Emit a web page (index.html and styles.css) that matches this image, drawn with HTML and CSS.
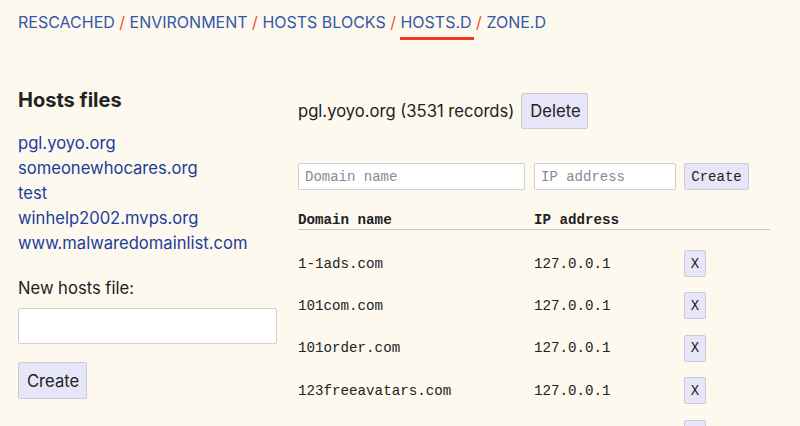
FILE: index.html
```html
<!DOCTYPE html>
<html lang="en">
<head>
<meta charset="utf-8">
<title>Hosts files</title>
<link rel="stylesheet" href="styles.css">
</head>
<body>
<nav class="crumbs">
  <a href="#">RESCACHED</a><span class="sep">/</span><a href="#">ENVIRONMENT</a><span class="sep">/</span><a href="#">HOSTS BLOCKS</a><span class="sep">/</span><a href="#" class="current">HOSTS.D</a><span class="sep">/</span><a href="#">ZONE.D</a>
</nav>
<main class="layout">
  <aside class="sidebar">
    <h2 class="sidebar-title">Hosts files</h2>
    <ul class="files">
      <li><a href="#">pgl.yoyo.org</a></li>
      <li><a href="#">someonewhocares.org</a></li>
      <li><a href="#">test</a></li>
      <li><a href="#">winhelp2002.mvps.org</a></li>
      <li><a href="#">www.malwaredomainlist.com</a></li>
    </ul>
    <form class="new-file">
      <label class="new-file-label" for="nf">New hosts file:</label>
      <input class="new-file-input" id="nf" type="text">
      <button class="btn btn-large" type="button">Create</button>
    </form>
  </aside>
  <section class="detail">
    <div class="detail-head">
      <span class="detail-title">pgl.yoyo.org (3531 records)</span>
      <button class="btn btn-large" type="button">Delete</button>
    </div>
    <form class="add-record">
      <input class="mono-input input-domain" type="text" placeholder="Domain name">
      <input class="mono-input input-ip" type="text" placeholder="IP address">
      <button class="btn btn-mono" type="button">Create</button>
    </form>
    <table class="records">
      <thead>
        <tr><th class="col-domain">Domain name</th><th class="col-ip">IP address</th><th class="col-act"></th></tr>
      </thead>
      <tbody>
        <tr><td>1-1ads.com</td><td>127.0.0.1</td><td><button class="btn btn-x" type="button">X</button></td></tr>
        <tr><td>101com.com</td><td>127.0.0.1</td><td><button class="btn btn-x" type="button">X</button></td></tr>
        <tr><td>101order.com</td><td>127.0.0.1</td><td><button class="btn btn-x" type="button">X</button></td></tr>
        <tr><td>123freeavatars.com</td><td>127.0.0.1</td><td><button class="btn btn-x" type="button">X</button></td></tr>
        <tr class="row-partial"><td></td><td></td><td><button class="btn btn-x" type="button">X</button></td></tr>
      </tbody>
    </table>
  </section>
</main>
</body>
</html>
```

FILE: styles.css
```css
html, body {
  margin: 0;
  padding: 0;
  background: #fdf9ef;
  font-family: Inter, "Noto Sans", sans-serif;
  color: #222;
}

body {
  padding: 12px 18px 0 18px;
  overflow: hidden;
  height: 426px;
  box-sizing: border-box;
}

.crumbs {
  font-size: 16px;
  line-height: 20px;
  letter-spacing: 0;
}

.crumbs a {
  color: #3557a6;
  text-decoration: none;
  display: inline-block;
}

.crumbs .current {
  position: relative;
}

.crumbs .current::after {
  content: "";
  position: absolute;
  left: 0;
  right: -2px;
  top: 25px;
  height: 3px;
  background: #ee3b1e;
}

.crumbs .sep {
  color: #f0512c;
  margin: 0 4.5px;
}

.layout {
  display: flex;
  gap: 21px;
  margin-top: 56px;
}

.sidebar {
  width: 259px;
  flex: none;
}

.sidebar-title {
  margin: 0;
  font-size: 20px;
  line-height: 24px;
  font-weight: 700;
  color: #222;
}

.files {
  list-style: none;
  margin: 19px 0 0 0;
  padding: 0;
  font-size: 16.6px;
  line-height: 25px;
}

.files a {
  color: #1b3d9c;
  text-decoration: none;
}

.new-file {
  display: flex;
  flex-direction: column;
  align-items: flex-start;
  margin-top: 20px;
}

.new-file-label {
  font-size: 16.6px;
  line-height: 25px;
  color: #222;
}

.new-file-input {
  margin-top: 7px;
  width: 259px;
  height: 36px;
  box-sizing: border-box;
  border: 1px solid #cfcfcf;
  border-radius: 2px;
  background: #fff;
}

.btn {
  background: #e6e6f8;
  border: 1px solid #cbcbd6;
  border-radius: 2px;
  color: #222;
  padding: 0;
  box-sizing: border-box;
}

.btn-large {
  font-family: Inter, "Noto Sans", sans-serif;
  font-size: 16.6px;
  height: 37px;
  padding: 0 8px;
}

.new-file .btn-large {
  margin-top: 18px;
  width: 69px;
}

.detail {
  width: 472px;
  flex: none;
  padding-top: 5px;
}

.detail-head {
  display: flex;
  align-items: center;
  gap: 7px;
}

.detail-title {
  font-size: 16.6px;
}

.detail-head .btn-large {
  height: 36px;
  width: 67px;
}

.add-record {
  display: flex;
  margin-top: 34px;
  align-items: center;
}

.mono-input {
  font-family: "Liberation Mono", "DejaVu Sans Mono", monospace;
  font-size: 14px;
  height: 27px;
  box-sizing: border-box;
  border: 1px solid #cfcfcf;
  border-radius: 2px;
  background: #fff;
  padding: 0 6px;
  color: #222;
}

.mono-input::placeholder {
  color: #8a8a8a;
}

.input-domain {
  width: 227px;
  margin-right: 9px;
}

.input-ip {
  width: 142px;
  margin-right: 8px;
}

.btn-mono {
  font-family: "Liberation Mono", "DejaVu Sans Mono", monospace;
  font-size: 14px;
  height: 27px;
  width: 65px;
}

.records {
  margin-top: 22px;
  width: 472px;
  border-collapse: collapse;
  font-family: "Liberation Mono", "DejaVu Sans Mono", monospace;
  font-size: 14.2px;
  color: #222;
}

.records th {
  text-align: left;
  font-weight: 700;
  line-height: 16px;
  padding: 0 0 1px 0;
  border-bottom: 1px solid #c8c8c8;
}

.col-domain { width: 236px; }
.col-ip { width: 150px; }

.records td {
  padding: 7.7px 0;
  line-height: 16px;
}

.records tbody tr:first-child td {
  padding-top: 20px;
}

.btn-x {
  font-family: "Liberation Mono", "DejaVu Sans Mono", monospace;
  font-size: 14px;
  width: 22px;
  height: 27px;
  display: block;
}
```
